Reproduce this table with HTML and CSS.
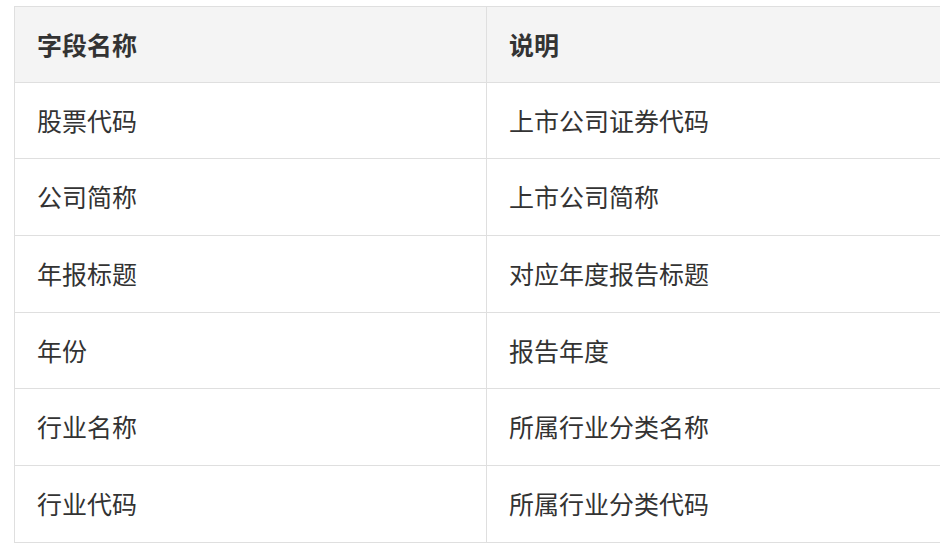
FILE: index.html
```html
<!DOCTYPE html>
<html lang="zh-CN">
<head>
<meta charset="utf-8">
<link rel="stylesheet" href="styles.css">
</head>
<body>
<div class="table-wrap">
<table class="fields">
  <thead>
    <tr><th class="col-name">字段名称</th><th>说明</th></tr>
  </thead>
  <tbody>
    <tr><td>股票代码</td><td>上市公司证券代码</td></tr>
    <tr><td>公司简称</td><td>上市公司简称</td></tr>
    <tr><td>年报标题</td><td>对应年度报告标题</td></tr>
    <tr><td>年份</td><td>报告年度</td></tr>
    <tr><td>行业名称</td><td>所属行业分类名称</td></tr>
    <tr><td>行业代码</td><td>所属行业分类代码</td></tr>
  </tbody>
</table>
</div>
</body>
</html>
```

FILE: styles.css
```css
html, body {
  margin: 0;
  padding: 0;
  background: #fff;
  overflow: hidden;
}
body {
  padding: 6px 0 0 14px;
  font-family: "Noto Sans CJK SC", "Noto Sans", sans-serif;
  color: #333;
}
.table-wrap {
  width: 926px;
  overflow: hidden;
}
.fields {
  border-collapse: collapse;
  width: 1000px;
  table-layout: fixed;
  font-size: 25px;
}
.fields th,
.fields td {
  border: 1px solid #dfdfdf;
  padding: 20px 22px;
  line-height: 35.67px;
  text-align: left;
  vertical-align: middle;
}
.fields th {
  background: #f4f4f4;
  font-weight: bold;
  padding: 19.5px 22px;
}
.fields .col-name {
  width: 427px;
}
```
